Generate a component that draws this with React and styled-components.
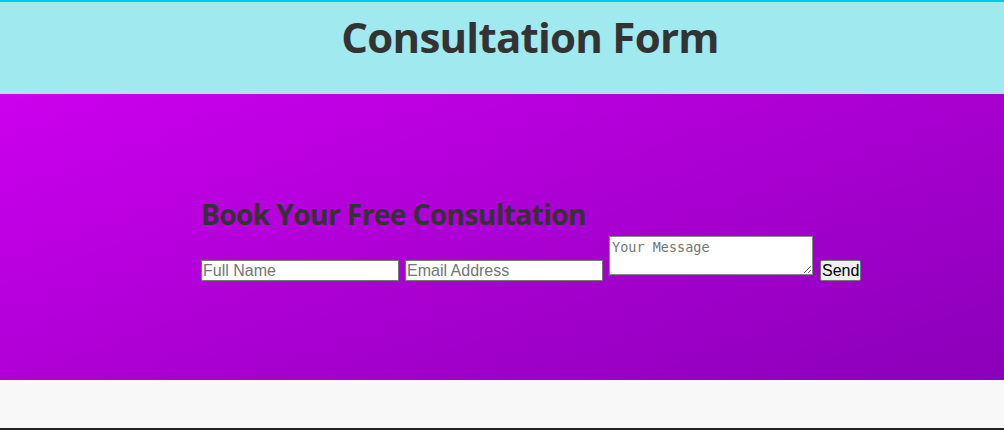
import React from "react";
import styled, { createGlobalStyle } from "styled-components";

const Global = createGlobalStyle`
  html, body { margin: 0; padding: 0; background: #f8f8f8; }
  body { font-family: "Open Sans", "Liberation Sans", sans-serif; color: #333; }
`;

const Page = styled.div`
  display: flex;
  flex-direction: column;
  min-height: 430px;
`;

const Header = styled.header`
  background: #a0e9ee;
  border-top: 2px solid #00c8f0;
  height: 94px;
  display: flex;
  justify-content: center;
  padding-left: 56px;
  box-sizing: border-box;
`;

const Title = styled.h1`
  margin: 0;
  padding-top: 4px;
  font-family: "Open Sans", sans-serif;
  font-weight: 700;
  font-size: 42px;
  line-height: 62px;
  letter-spacing: -0.75px;
  color: #333;
`;

const Hero = styled.section`
  background: linear-gradient(160deg, #cc00ee 0%, #8a00b8 100%);
  height: 286px;
  box-sizing: border-box;
  padding: 102px 0 0 201px;
`;

const Subtitle = styled.h2`
  margin: 0 0 4px;
  font-family: "Open Sans", sans-serif;
  font-weight: 700;
  font-size: 28px;
  line-height: 36px;
  letter-spacing: -0.55px;
  color: #333;
`;

const Form = styled.form`
  display: flex;
  align-items: flex-end;
  gap: 6px;
`;

const Field = styled.input`
  width: 198px;
  height: 21px;
  box-sizing: border-box;
  border: 1px solid #767676;
  padding: 0 1px;
  font-family: "Liberation Sans", Arial, sans-serif;
  font-size: 16px;
  background: #fff;
  &::placeholder { color: #757575; }
`;

const Message = styled.textarea`
  width: 204px;
  height: 39px;
  box-sizing: border-box;
  border: 1px solid #8a8a8a;
  padding: 2px;
  margin-bottom: 6px;
  font-family: "DejaVu Sans Mono", monospace;
  font-size: 13.5px;
  resize: both;
  &::placeholder { color: #757575; }
`;

const Send = styled.button`
  margin-left: 1px;
  height: 21px;
  padding: 0 1px;
  box-sizing: border-box;
  border: 1px solid #767676;
  border-radius: 2px;
  background: #efefef;
  font-family: "Liberation Sans", Arial, sans-serif;
  font-size: 16px;
  color: #000;
`;

const Band = styled.div`
  height: 48px;
  background: #f8f8f8;
`;

const Footer = styled.footer`
  flex: 1;
  background: #222;
`;

export default function App() {
  return (
    <>
      <Global />
      <Page>
        <Header>
          <Title>Consultation Form</Title>
        </Header>
        <Hero>
          <Subtitle>Book Your Free Consultation</Subtitle>
          <Form onSubmit={(e) => e.preventDefault()}>
            <Field type="text" placeholder="Full Name" />
            <Field type="email" placeholder="Email Address" />
            <Message placeholder="Your Message" />
            <Send type="submit">Send</Send>
          </Form>
        </Hero>
        <Band />
        <Footer />
      </Page>
    </>
  );
}
